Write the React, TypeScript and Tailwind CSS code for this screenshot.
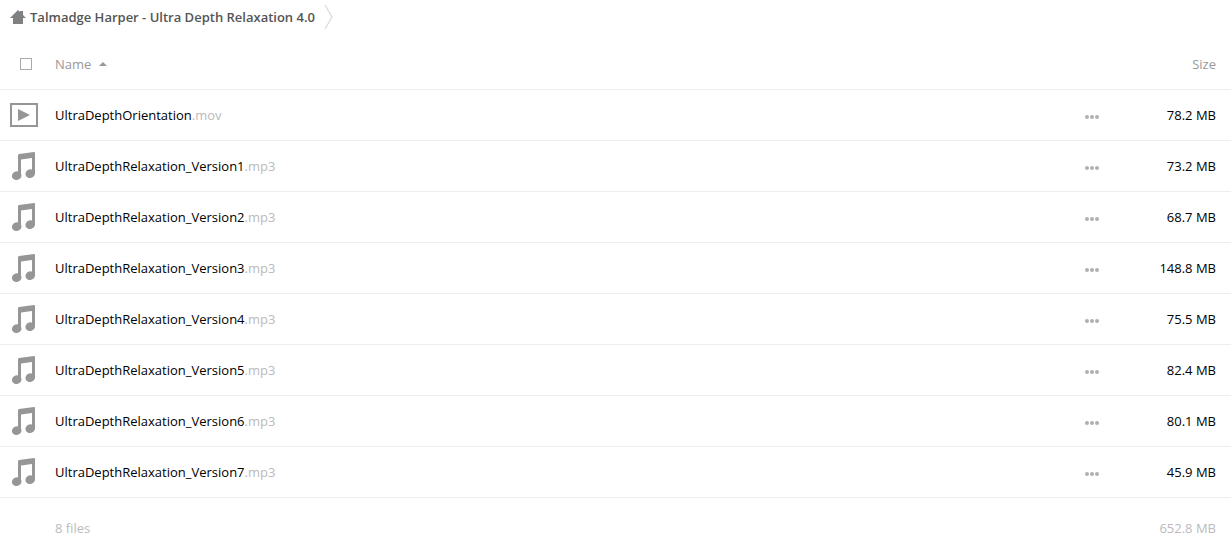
const files = [
  { name: 'UltraDepthOrientation', ext: '.mov', size: '78.2 MB' },
  { name: 'UltraDepthRelaxation_Version1', ext: '.mp3', size: '73.2 MB' },
  { name: 'UltraDepthRelaxation_Version2', ext: '.mp3', size: '68.7 MB' },
  { name: 'UltraDepthRelaxation_Version3', ext: '.mp3', size: '148.8 MB' },
  { name: 'UltraDepthRelaxation_Version4', ext: '.mp3', size: '75.5 MB' },
  { name: 'UltraDepthRelaxation_Version5', ext: '.mp3', size: '82.4 MB' },
  { name: 'UltraDepthRelaxation_Version6', ext: '.mp3', size: '80.1 MB' },
  { name: 'UltraDepthRelaxation_Version7', ext: '.mp3', size: '45.9 MB' },
];

function VideoIcon() {
  return (
    <svg width="28" height="24" viewBox="0 0 28 24" aria-hidden="true">
      <rect x="1" y="1" width="26" height="22" fill="none" stroke="#969696" strokeWidth="2" />
      <path d="M8 6v12l12-6z" fill="#969696" />
    </svg>
  );
}

function MusicIcon() {
  return (
    <svg width="28" height="28" viewBox="0 0 28 28" aria-hidden="true" fill="#969696">
      <path d="M8 3.2Q8 2.3 9 2.1L24 0Q25 0 25 1V22H22V6L11 7.6V24H8z" />
      <ellipse cx="6.7" cy="23.7" rx="4.8" ry="4.3" transform="rotate(-15 6.7 23.7)" />
      <ellipse cx="20.2" cy="21.7" rx="4.8" ry="4.3" transform="rotate(-15 20.2 21.7)" />
    </svg>
  );
}

export default function App() {
  return (
    <main className="bg-white font-['Open_Sans',sans-serif] text-[13px] leading-5 text-black">
      <nav aria-label="Breadcrumb" className="flex h-[39px] items-start pl-2.5 text-[#555]">
        <a href="#" className="flex h-[34px] items-center gap-1 font-semibold">
          <svg width="16" height="14" viewBox="0 0 16 14" fill="#808080" aria-hidden="true">
            <path d="M8 0L0 8h3v6h10V8h3l-3-3V1h-3v1z" />
          </svg>
          Talmadge Harper - Ultra Depth Relaxation 4.0
        </a>
        <svg className="ml-2" width="10" height="34" viewBox="0 0 10 34" fill="none" stroke="#d8d8d8" strokeWidth="1.2" aria-hidden="true">
          <path d="M2 5l7 12-7 12" />
        </svg>
      </nav>
      <table className="w-full table-fixed border-collapse">
        <thead>
          <tr className="h-[50px] border-b border-[#eee] text-[#999]">
            <th className="w-[55px] pl-5 text-left">
              <input type="checkbox" aria-label="Select all" className="block size-3 appearance-none border border-[#aaa]" />
            </th>
            <th className="text-left font-normal">
              <button type="button" className="flex items-center gap-2">
                Name
                <svg width="8" height="4" viewBox="0 0 8 4" fill="#999" aria-hidden="true"><path d="M4 0l4 4H0z" /></svg>
              </button>
            </th>
            <th className="w-[46px]" />
            <th className="w-[100px] pr-[15px] text-right font-normal">Size</th>
          </tr>
        </thead>
        <tbody>
          {files.map((f) => (
            <tr key={f.name} className="h-[51px] border-b border-[#eee]">
              <td className="pl-2.5">{f.ext === '.mov' ? <VideoIcon /> : <MusicIcon />}</td>
              <td>{f.name}<span className="text-[#bbb]">{f.ext}</span></td>
              <td>
                <button type="button" aria-label={`Actions for ${f.name}`} className="block pt-1">
                  <svg className="block" width="14" height="4" viewBox="0 0 14 4" fill="#b0b0b0" aria-hidden="true">
                    <circle cx="2" cy="2" r="2" /><circle cx="7" cy="2" r="2" /><circle cx="12" cy="2" r="2" />
                  </svg>
                </button>
              </td>
              <td className="pr-[15px] text-right">{f.size}</td>
            </tr>
          ))}
        </tbody>
        <tfoot>
          <tr className="h-[62px] text-[#bbb]">
            <td />
            <td>8 files</td>
            <td />
            <td className="pr-[15px] text-right">652.8 MB</td>
          </tr>
        </tfoot>
      </table>
    </main>
  );
}
